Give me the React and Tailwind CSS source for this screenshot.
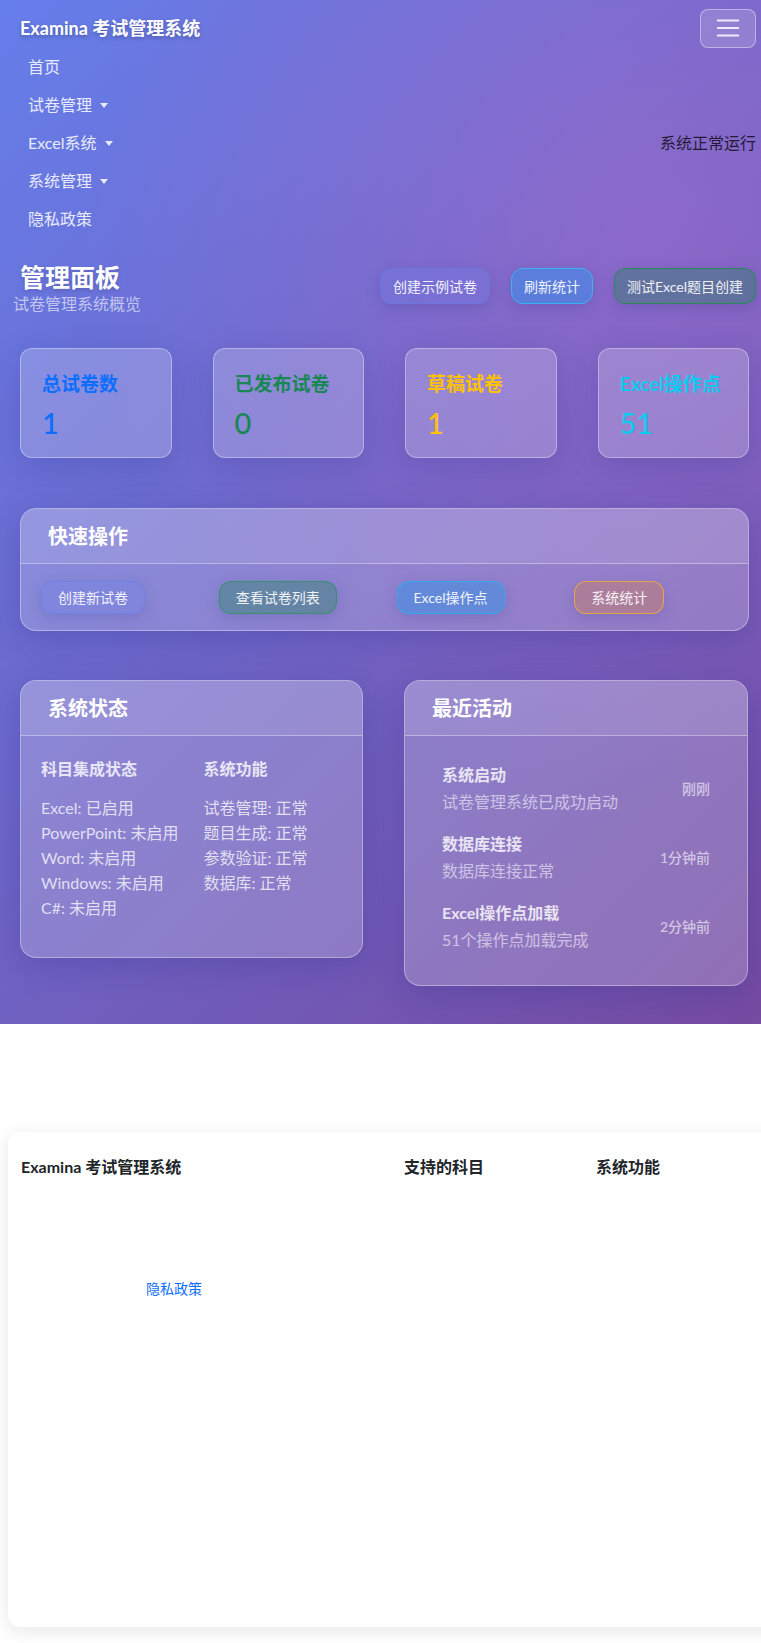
import React from 'react';

const navItems = [
  { label: '首页', caret: false },
  { label: '试卷管理', caret: true },
  { label: 'Excel系统', caret: true },
  { label: '系统管理', caret: true },
  { label: '隐私政策', caret: false },
];

const stats = [
  { label: '总试卷数', value: '1', color: 'text-[#0d6efd]' },
  { label: '已发布试卷', value: '0', color: 'text-[#198754]' },
  { label: '草稿试卷', value: '1', color: 'text-[#ffc107]' },
  { label: 'Excel操作点', value: '51', color: 'text-[#0dcaf0]' },
];

const quickActions = [
  { label: '创建新试卷', cls: 'bg-[rgba(102,126,234,0.25)] border-[rgba(102,126,234,0.6)]' },
  { label: '查看试卷列表', cls: 'bg-[rgba(25,135,84,0.35)] border-[rgba(40,150,90,0.75)]' },
  { label: 'Excel操作点', cls: 'bg-[rgba(30,150,235,0.4)] border-[rgba(40,175,240,0.85)]' },
  { label: '系统统计', cls: 'bg-[rgba(215,125,70,0.35)] border-[rgba(245,175,50,0.8)]' },
];

const subjects = ['Excel: 已启用', 'PowerPoint: 未启用', 'Word: 未启用', 'Windows: 未启用', 'C#: 未启用'];
const features = ['试卷管理: 正常', '题目生成: 正常', '参数验证: 正常', '数据库: 正常'];

const activities = [
  { title: '系统启动', desc: '试卷管理系统已成功启动', time: '刚刚' },
  { title: '数据库连接', desc: '数据库连接正常', time: '1分钟前' },
  { title: 'Excel操作点加载', desc: '51个操作点加载完成', time: '2分钟前' },
];

function GlassCard({ title, children, className = '' }) {
  return (
    <div className={`rounded-2xl border border-white/35 bg-white/20 shadow-[0_8px_32px_rgba(31,38,135,0.25)] overflow-hidden ${className}`}>
      <div className="h-[55px] flex items-center px-[27px] bg-white/10 border-b border-white/35">
        <h5 className="text-[20px] font-bold text-white">{title}</h5>
      </div>
      {children}
    </div>
  );
}

export default function App() {
  return (
    <div className="min-h-[1643px] w-[761px] overflow-hidden bg-white font-['Lato','Noto_Sans_CJK_SC',sans-serif]">
      {/* Gradient hero area */}
      <div className="h-[1024px] bg-[radial-gradient(circle_at_85%_22%,rgba(175,110,205,0.45),transparent_55%),linear-gradient(135deg,#667eea_0%,#764ba2_100%)]">
        {/* Navbar */}
        <nav className="pt-2">
          <div className="flex items-center justify-between pl-5 pr-[5px]">
            <span className="text-[18px] font-bold text-white leading-10 [text-shadow:0_2px_4px_rgba(0,0,0,0.25)]">
              Examina 考试管理系统
            </span>
            <button className="w-[56px] h-[39px] rounded-lg border border-white/40 bg-white/15 flex items-center justify-center">
              <svg width="28" height="28" viewBox="0 0 30 30">
                <path d="M4 7h22M4 15h22M4 23h22" stroke="rgba(255,255,255,0.85)" strokeWidth="2" strokeLinecap="round" />
              </svg>
            </button>
          </div>
          <div className="flex items-center justify-between">
            <ul className="pl-7">
              {navItems.map((item) => (
                <li key={item.label} className="h-[38px] flex items-center text-[16px] text-white/85">
                  {item.label}
                  {item.caret && (
                    <span className="ml-2 inline-block border-t-[5px] border-x-[4px] border-x-transparent border-t-white/85" />
                  )}
                </li>
              ))}
            </ul>
            <span className="text-[16px] text-black/75 pr-[5px]">系统正常运行</span>
          </div>
        </nav>

        {/* Page header */}
        <div className="mt-6 flex items-center justify-between pl-5 pr-[5px]">
          <div>
            <h2 className="text-[25px] leading-[30px] font-bold text-white [text-shadow:0_2px_4px_rgba(0,0,0,0.15)]">管理面板</h2>
            <p className="text-[16px] leading-6 text-white/60 -ml-[7px]">试卷管理系统概览</p>
          </div>
          <div className="flex gap-[21px] -mt-[6px]">
            <button className="h-[36px] px-3 rounded-xl border border-[rgba(102,126,234,0.55)] bg-[rgba(102,126,234,0.25)] text-[14px] text-white/90 shadow-[0_4px_14px_rgba(60,60,140,0.25)]">
              创建示例试卷
            </button>
            <button className="h-[36px] px-3 rounded-xl border border-[#3ab4f0] bg-[rgba(40,150,240,0.45)] text-[14px] text-white/90 shadow-[0_4px_14px_rgba(60,60,140,0.25)]">
              刷新统计
            </button>
            <button className="h-[36px] px-3 rounded-xl border border-[rgba(35,140,80,0.85)] bg-[rgba(25,135,84,0.35)] text-[14px] text-white/90 shadow-[0_4px_14px_rgba(60,60,140,0.25)]">
              测试Excel题目创建
            </button>
          </div>
        </div>

        {/* Stat cards */}
        <div className="mt-[32px] grid grid-cols-4 gap-[41px] pl-5 pr-3">
          {stats.map((s) => (
            <div
              key={s.label}
              className="rounded-xl border border-white/35 bg-white/20 shadow-[0_8px_32px_rgba(31,38,135,0.2)] pl-[21px] pt-[23px] pb-[17px]"
            >
              <h5 className={`text-[19px] leading-6 font-bold ${s.color}`}>{s.label}</h5>
              <div className={`mt-[10px] text-[29px] leading-[34px] font-medium ${s.color}`}>{s.value}</div>
            </div>
          ))}
        </div>

        {/* Quick actions */}
        <GlassCard title="快速操作" className="mt-[50px] ml-5 mr-3">
          <div className="px-5 pt-[17px] pb-[16px]">
            <div className="-mx-3 grid grid-cols-4">
              {quickActions.map((a) => (
                <div key={a.label} className="px-3">
                  <button
                    className={`h-[33px] px-4 rounded-xl border text-[14px] text-white/90 shadow-[0_4px_14px_rgba(60,60,140,0.2)] ${a.cls}`}
                  >
                    {a.label}
                  </button>
                </div>
              ))}
            </div>
          </div>
        </GlassCard>

        {/* Status + activity */}
        <div className="mt-[49px] ml-5 grid grid-cols-[343px_344px] gap-[41px] items-start">
          <GlassCard title="系统状态">
            <div className="px-5 pt-[21px] pb-[21px]">
              <div className="-mx-3 grid grid-cols-2">
                <div className="px-3">
                  <h6 className="text-[16px] leading-6 font-bold text-white/80 mb-[14px]">科目集成状态</h6>
                  <ul className="mb-4">
                    {subjects.map((t) => (
                      <li key={t} className="text-[16px] leading-[25px] text-white/75">{t}</li>
                    ))}
                  </ul>
                </div>
                <div className="px-3">
                  <h6 className="text-[16px] leading-6 font-bold text-white/80 mb-[14px]">系统功能</h6>
                  <ul className="mb-4">
                    {features.map((t) => (
                      <li key={t} className="text-[16px] leading-[25px] text-white/75">{t}</li>
                    ))}
                  </ul>
                </div>
              </div>
            </div>
          </GlassCard>

          <GlassCard title="最近活动">
            <div className="px-5 pt-[18px] pb-[24px]">
              {activities.map((a) => (
                <div key={a.title} className="py-[9px] px-[17px] flex items-center justify-between">
                  <div>
                    <div className="text-[16px] leading-6 font-bold text-white/80">{a.title}</div>
                    <div className="mt-[3px] text-[16px] leading-6 text-white/55">{a.desc}</div>
                  </div>
                  <span className="text-[14px] font-medium text-white/60">{a.time}</span>
                </div>
              ))}
            </div>
          </GlassCard>
        </div>
      </div>

      {/* Footer */}
      <footer className="mt-[108px] ml-2 -mr-10 h-[495px] rounded-xl bg-white shadow-[0_4px_18px_rgba(0,0,0,0.1)] pl-[13px] pt-[23px]">
        <div className="grid grid-cols-[383px_192px_192px]">
          <div>
            <h6 className="text-[16px] leading-6 font-bold text-[#212529]">Examina 考试管理系统</h6>
            <a className="block mt-[100px] ml-[125px] text-[14px] leading-5 text-[#0d6efd]">隐私政策</a>
          </div>
          <h6 className="text-[16px] leading-6 font-bold text-[#212529]">支持的科目</h6>
          <h6 className="text-[16px] leading-6 font-bold text-[#212529]">系统功能</h6>
        </div>
      </footer>
    </div>
  );
}
